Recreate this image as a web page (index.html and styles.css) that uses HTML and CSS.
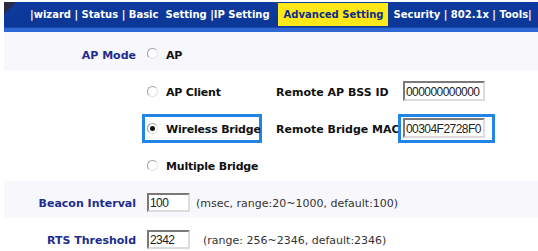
FILE: index.html
```html
<!DOCTYPE html>
<html>
<head>
  <meta charset="utf-8">
  <title>Advanced Setting</title>
  <link rel="stylesheet" href="styles.css">
</head>
<body>
  <div class="nav">
    <span class="nav-links">|wizard | Status | Basic&nbsp; Setting |IP Setting</span>
    <span class="nav-active">Advanced Setting</span>
    <span class="nav-links">Security | 802.1x | Tools|</span>
  </div>

  <div class="form">
    <div class="row shade">
      <div class="label">AP Mode</div>
      <div class="value">
        <label class="opt"><span class="radio"></span><span class="opt-text">AP</span></label>
      </div>
    </div>

    <div class="row">
      <div class="label"></div>
      <div class="value">
        <label class="opt"><span class="radio"></span><span class="opt-text">AP Client</span></label>
        <span class="remote">Remote AP BSS ID</span>
        <span class="field"><input class="text" type="text" value="000000000000"></span>
      </div>
    </div>

    <div class="row">
      <div class="label"></div>
      <div class="value">
        <label class="opt opt--focus"><span class="radio radio--on"></span><span class="opt-text">Wireless Bridge</span></label>
        <span class="remote">Remote Bridge MAC</span>
        <span class="field field--focus"><input class="text" type="text" value="00304F2728F0"></span>
      </div>
    </div>

    <div class="row">
      <div class="label"></div>
      <div class="value">
        <label class="opt"><span class="radio"></span><span class="opt-text">Multiple Bridge</span></label>
      </div>
    </div>

    <div class="row shade">
      <div class="label">Beacon Interval</div>
      <div class="value">
        <input class="text small" type="text" value="100">
        <span class="hint">(msec, range:20~1000, default:100)</span>
      </div>
    </div>

    <div class="row">
      <div class="label">RTS Threshold</div>
      <div class="value">
        <input class="text small" type="text" value="2342">
        <span class="hint hint--wide">(range: 256~2346, default:2346)</span>
      </div>
    </div>
  </div>
</body>
</html>
```

FILE: styles.css
```css
body {
  margin: 0;
  background: #fff;
  font-family: "DejaVu Sans", Verdana, sans-serif;
  overflow: hidden;
}

/* top menu */

.nav {
  display: flex;
  align-items: center;
  box-sizing: border-box;
  height: 30px;
  margin: 2px 0 0 4px;
  padding: 0 0 5px 26px;
  background: linear-gradient(180deg, #0d3a9e 0, #0b3796 84%, #2f68d4 87%, #2f68d4 100%);
  position: relative;
  font-size: 10px;
  font-weight: bold;
  color: #fff;
  white-space: pre;
}
.nav:before {
  content: '';
  position: absolute;
  left: 0;
  top: 0;
  width: 14px;
  height: 12px;
  background: linear-gradient(135deg, #2a2a44 0, #2a2a44 45%, transparent 50%);
}
.nav-active {
  display: flex;
  align-items: center;
  align-self: flex-start;
  height: 23px;
  margin: 1px 6px 0 8px;
  padding: 0 4px 0 6px;
  background: #ffe817;
  color: #0c2c8c;
}

/* form rows */

.form {
  margin-left: 4px;
  font-size: 11px;
}
.row {
  display: grid;
  grid-template-columns: 138px 1fr;
  align-items: center;
  height: 37px;
}
.row:first-child {
  height: 38px;
}
.row.shade {
  background: #f8f7fb;
}
.label {
  text-align: right;
  padding-right: 6px;
  padding-top: 8px;
  font-weight: bold;
  color: #1d2c8e;
}
.value {
  display: flex;
  align-items: center;
  padding-top: 5px;
}

.opt {
  display: flex;
  align-items: center;
  box-sizing: border-box;
  width: 120px;
  height: 29px;
  padding-left: 2px;
  border: 3px solid transparent;
  font-weight: bold;
  color: #111;
  white-space: nowrap;
  letter-spacing: -0.2px;
}
.opt-text {
  padding-top: 3px;
}
.opt--focus {
  border-color: #2185e6;
}
.radio {
  flex: none;
  width: 9px;
  height: 9px;
  margin-right: 8px;
  border-radius: 50%;
  border: 1px solid #a0a0a0;
  border-right-color: #e4e4e4;
  border-bottom-color: #e4e4e4;
  background: #fff;
  position: relative;
}
.radio--on:after {
  content: '';
  position: absolute;
  left: 2px;
  top: 2px;
  width: 5px;
  height: 5px;
  border-radius: 50%;
  background: #111;
}

.remote {
  width: 122px;
  margin-left: 14px;
  padding-top: 3px;
  font-weight: bold;
  color: #111;
  white-space: nowrap;
}
.field {
  display: flex;
  box-sizing: border-box;
  height: 29px;
  align-items: center;
  padding: 0 7px 0 2px;
  border: 3px solid transparent;
}
.field--focus {
  border-color: #2185e6;
}

.text {
  box-sizing: border-box;
  width: 82px;
  height: 20px;
  margin: 0;
  padding: 1px 1px 0;
  border: 2px solid;
  border-color: #7a7a7a #dcdcdc #dcdcdc #7a7a7a;
  font-family: "Liberation Sans", Arial, sans-serif;
  font-size: 12px;
  letter-spacing: -0.55px;
  color: #222;
  background: #fff;
}
.text.small {
  width: 43px;
  height: 19px;
  margin-left: 5px;
}
.hint {
  margin-left: 6px;
  padding-top: 3px;
  color: #333;
}
.hint--wide {
  margin-left: 13px;
}
```
